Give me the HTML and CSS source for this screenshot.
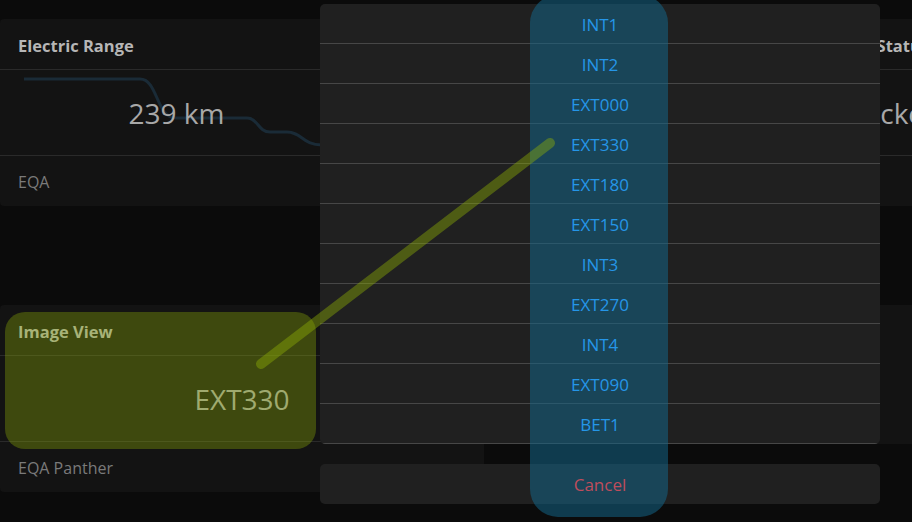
FILE: index.html
```html
<!DOCTYPE html>
<html lang="en">
<head>
<meta charset="utf-8">
<title>Dashboard – Image View picker</title>
<link rel="stylesheet" href="styles.css">
</head>
<body>
<main class="dashboard">
  <div class="row row-top">
    <section class="card card-range">
      <header class="card-head">Electric Range</header>
      <div class="card-body">
        <svg class="spark" width="353" height="85" viewBox="0 0 353 85">
          <path d="M24 9 H140 C158 9 156 48 176 48 H247 C258 48 258 62 270 62 H287 C302 62 302 75 322 75 H353" fill="none" stroke="#1a2b37" stroke-width="3"/>
        </svg>
        <span class="card-value">239 km</span>
      </div>
      <footer class="card-foot">EQA</footer>
    </section>
    <section class="card card-lock">
      <header class="card-head">Lock Status</header>
      <div class="card-body"><span class="card-value">Locked</span></div>
      <footer class="card-foot"></footer>
    </section>
  </div>
  <div class="row row-bottom">
    <section class="card card-image">
      <header class="card-head">Image View</header>
      <div class="card-body"><span class="card-value">EXT330</span></div>
      <footer class="card-foot">EQA Panther</footer>
    </section>
    <section class="card card-blank"></section>
  </div>
</main>

<div class="highlight-image"></div>

<div class="picker">
  <div class="picker-focus"></div>
  <ul class="picker-list">
    <li><span>INT1</span></li>
    <li><span>INT2</span></li>
    <li><span>EXT000</span></li>
    <li><span>EXT330</span></li>
    <li><span>EXT180</span></li>
    <li><span>EXT150</span></li>
    <li><span>INT3</span></li>
    <li><span>EXT270</span></li>
    <li><span>INT4</span></li>
    <li><span>EXT090</span></li>
    <li><span>BET1</span></li>
  </ul>
  <button class="picker-cancel" type="button"><span>Cancel</span></button>
</div>

<svg class="connector" width="912" height="522" viewBox="0 0 912 522">
  <line x1="261" y1="364" x2="550" y2="143" stroke="rgba(142,176,5,0.42)" stroke-width="10" stroke-linecap="round"/>
</svg>
</body>
</html>
```

FILE: styles.css
```css
html, body {
  margin: 0;
  padding: 0;
}

body {
  width: 912px;
  height: 522px;
  overflow: hidden;
  position: relative;
  background: #0b0b0b;
  font-family: "Open Sans", "Noto Sans", sans-serif;
}

.dashboard {
  padding-top: 19px;
  display: flex;
  flex-direction: column;
  gap: 99px;
}

.row-top {
  display: grid;
  grid-template-columns: 353px 158px;
  justify-content: space-between;
  width: 974px;
}

.row-bottom {
  display: grid;
  grid-template-columns: 484px 420px;
  column-gap: 20px;
  align-items: start;
}

.card {
  background: #131313;
  border-radius: 4px;
  display: flex;
  flex-direction: column;
}

.card-head {
  box-sizing: border-box;
  height: 51px;
  border-bottom: 1px solid #2a2a2a;
  padding: 2px 18px 0;
  display: flex;
  align-items: center;
  font-size: 16.5px;
  font-weight: 700;
  color: #b6b6b6;
  white-space: nowrap;
}

.card-body {
  position: relative;
  height: 85px;
  border-bottom: 1px solid #2a2a2a;
  display: flex;
  align-items: center;
  justify-content: center;
}

.card-value {
  position: relative;
  font-size: 28px;
  color: #a8a8a8;
  white-space: nowrap;
}

.spark {
  position: absolute;
  left: 0;
  top: 0;
}

.card-foot {
  box-sizing: border-box;
  height: 50px;
  padding: 1px 18px 0;
  display: flex;
  align-items: center;
  font-size: 16px;
  color: #7a7a7a;
}

.card-blank {
  height: 139px;
}

.highlight-image {
  position: absolute;
  left: 5px;
  top: 312px;
  width: 311px;
  height: 137px;
  border-radius: 20px;
  background: rgba(142, 176, 5, 0.35);
}

.picker {
  position: absolute;
  left: 320px;
  top: 4px;
  width: 560px;
  display: flex;
  flex-direction: column;
  gap: 20px;
}

.picker-focus {
  position: absolute;
  left: 210px;
  top: -9px;
  width: 138px;
  height: 522px;
  border-radius: 28px;
  background: rgba(20, 100, 135, 0.55);
  z-index: 1;
}

.picker-list {
  list-style: none;
  margin: 0;
  padding: 0;
  background: #202020;
  border-radius: 5px;
  overflow: hidden;
}

.picker-list li {
  box-sizing: border-box;
  height: 40px;
  padding-top: 2px;
  border-bottom: 1px solid #474747;
  display: flex;
  align-items: center;
  justify-content: center;
  font-size: 17px;
  color: #2596e8;
}

.picker-list li span,
.picker-cancel span {
  position: relative;
  z-index: 2;
}

.picker-cancel {
  height: 40px;
  border: 0;
  margin: 0;
  padding: 0;
  background: #202020;
  border-radius: 5px;
  font-family: inherit;
  font-size: 17px;
  color: #bf4d5c;
}

.connector {
  position: absolute;
  left: 0;
  top: 0;
  z-index: 3;
}
```
